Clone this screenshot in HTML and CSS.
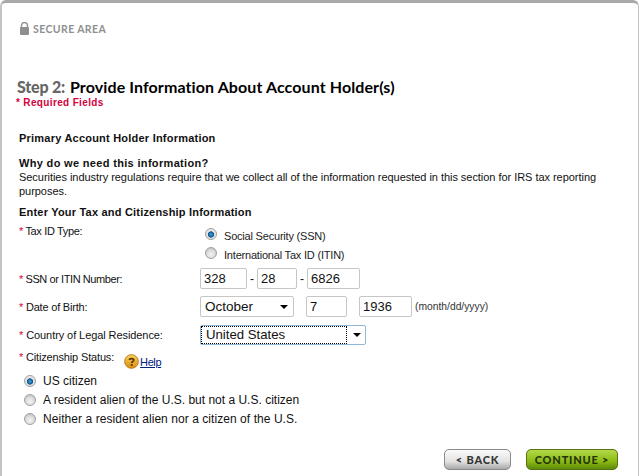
FILE: index.html
```html
<!DOCTYPE html>
<html lang="en">
<head>
<meta charset="utf-8">
<title>Step 2</title>
<link rel="stylesheet" href="styles.css">
</head>
<body>
<div class="frame">
  <div class="secure">
    <svg class="lock" width="9" height="13" viewBox="0 0 9 13"><path d="M1.5 5V3.5a3 3 0 0 1 6 0V5" fill="none" stroke="#8f8f8f" stroke-width="1.4"/><rect x="0" y="5" width="9" height="8" rx="1" fill="#8f8f8f"/></svg>
    <span>SECURE AREA</span>
  </div>
  <h1 class="title"><span class="step">Step 2:</span> Provide Information About Account Holder(s)</h1>
  <div class="required">* Required Fields</div>
  <div class="content">
    <div class="bold primary">Primary Account Holder Information</div>
    <div class="bold why">Why do we need this information?</div>
    <p class="note">Securities industry regulations require that we collect all of the information requested in this section for IRS tax reporting purposes.</p>
    <div class="bold enter">Enter Your Tax and Citizenship Information</div>

    <div class="row taxid">
      <div class="label l-tax"><span class="star">*</span> Tax ID Type:</div>
      <div class="radio-stack">
        <label class="opt"><input type="radio" name="tax" class="radio" checked> Social Security (SSN)</label>
        <label class="opt"><input type="radio" name="tax" class="radio"> International Tax ID (ITIN)</label>
      </div>
    </div>

    <div class="row ssn">
      <div class="label l-ssn"><span class="star">*</span> SSN or ITIN Number:</div>
      <input class="field w47" value="328"><span class="dash">-</span><input class="field w40" value="28"><span class="dash">-</span><input class="field w53" value="6826">
    </div>

    <div class="row dob">
      <div class="label l-dob"><span class="star">*</span> Date of Birth:</div>
      <div class="select month"><span>October</span><i class="arrow"></i></div>
      <input class="field w41 gap12" value="7">
      <input class="field w53 gap12" value="1936">
      <span class="hint">(month/dd/yyyy)</span>
    </div>

    <div class="row country">
      <div class="label l-country"><span class="star">*</span> Country of Legal Residence:</div>
      <div class="select focus"><span class="dotted">United States</span><i class="arrow"></i></div>
    </div>

    <div class="row citizen">
      <div class="label short"><span class="star">*</span> Citizenship Status:</div>
      <svg class="help-icon" width="16" height="16" viewBox="0 0 16 16"><defs><linearGradient id="h" x1="0" y1="0" x2="0" y2="1"><stop offset="0" stop-color="#fbd25e"/><stop offset="1" stop-color="#d98a10"/></linearGradient></defs><circle cx="8" cy="8" r="7.3" fill="url(#h)" stroke="#b8760e"/><path d="M5.6 6.2C5.8 4.6 10.4 4.4 10.4 6.6 10.4 8 8.2 8 8.2 9.6" fill="none" stroke="#5a3a05" stroke-width="1.8"/><rect x="7.2" y="10.6" width="2" height="2" fill="#5a3a05"/></svg>
      <a class="help" href="#">Help</a>
    </div>

    <div class="status">
      <label class="big"><input type="radio" name="cit" class="radio" checked> US citizen</label>
      <label class="big"><input type="radio" name="cit" class="radio"> A resident alien of the U.S. but not a U.S. citizen</label>
      <label class="big wide"><input type="radio" name="cit" class="radio"> Neither a resident alien nor a citizen of the U.S.</label>
    </div>
  </div>
  <div class="actions">
    <a class="btn back" href="#">&lt; BACK</a>
    <a class="btn continue" href="#">CONTINUE &gt;</a>
  </div>
</div>
</body>
</html>
```
FILE: styles.css
```css
html, body { margin: 0; padding: 0; background: #fff; }
body { width: 639px; height: 476px; overflow: hidden; font-family: "Liberation Sans", Arial, sans-serif; color: #111; }
.frame {
  box-sizing: border-box; width: 639px; height: 476px;
  border-top: 3px solid #a9a9a9; border-left: 2px solid #c4c4c4; border-right: 1px solid #c4c4c4;
  border-radius: 6px 6px 0 0; padding-top: 19px;
}
.secure { display: flex; align-items: center; gap: 4px; margin-left: 18px; height: 13px; color: #8f8f8f; font: bold 10.5px "Lato", sans-serif; letter-spacing: .4px; }
.lock { display: block; }
.title { margin: 42px 0 0 15px; font: bold 16px/20px "Lato", sans-serif; color: #000; letter-spacing: .1px; }
.step { color: #666; letter-spacing: -.2px; margin-right: 1px; font-weight: 900; }
.required { margin: 0 0 0 14px; font: bold 10px/12px "Liberation Sans", sans-serif; color: #d4003c; letter-spacing: .35px; }
.content { margin: 22px 0 0 17px; font-size: 11px; line-height: 14px; }
.bold { font-weight: bold; }
.primary { letter-spacing: .22px; }
.why { margin-top: 11px; letter-spacing: .33px; }
.note { margin: 0; width: 590px; letter-spacing: -.04px; }
.enter { margin-top: 7px; letter-spacing: .2px; }
.row { display: flex; align-items: center; }
.label { width: 181px; flex: none; font-size: 11px; }
.l-tax { letter-spacing: -.35px; margin-top: -2px; }
.l-ssn { letter-spacing: -.42px; }
.l-dob { letter-spacing: -.2px; }
.l-country { letter-spacing: -.08px; }
.star { color: #d4003c; }
.taxid { align-items: flex-start; margin-top: 7px; }
.radio-stack { display: flex; flex-direction: column; margin-left: 5px; }
.opt { display: flex; align-items: center; gap: 7px; height: 19px; font-size: 11px; color: #222; letter-spacing: -.2px; }
.opt .radio { margin-top: -4px; }
.radio {
  appearance: none; -webkit-appearance: none; margin: 0; width: 12px; height: 12px; border-radius: 50%; flex: none;
  border: 1px solid #a0a0a0; box-sizing: border-box;
  background: radial-gradient(circle at 50% 65%, #f4f4f4 0, #dcdcdc 50%, #b4b4b4 100%);
}
.radio:checked { background: radial-gradient(circle at 50% 55%, #3ea9de 0, #12508c 38%, #e0e0e0 46%, #f2f2f2 100%); }
.ssn { margin-top: 4px; }
.field {
  box-sizing: border-box; height: 21px; border: 1px solid #c6c6c6; border-radius: 2px; padding: 0 3px;
  font: 13px "Liberation Sans", sans-serif; color: #111; background: #fff; flex: none;
}
.w47 { width: 47px; } .w40 { width: 40px; } .w41 { width: 41px; } .w53 { width: 53px; }
.dash { width: 10px; text-align: center; font-size: 12px; flex: none; }
.dob { margin-top: 7px; }
.gap12 { margin-left: 12px; }
.select {
  box-sizing: border-box; display: flex; align-items: center; justify-content: space-between; height: 21px;
  border: 1px solid #c6c6c6; border-radius: 2px; padding: 0 5px 0 4px; font-size: 13.5px; flex: none;
}
.month { width: 94px; }
.focus { width: 166px; height: 20px; border-color: #8fb8d8; padding: 0 4px 0 0; font-size: 13.2px; }
.dotted { border: 1px dotted #000; box-sizing: border-box; flex: 1; height: 18px; line-height: 16px; padding-left: 4px; margin-right: 6px; }
.arrow { width: 0; height: 0; border: 4px solid transparent; border-top-color: #000; border-bottom: 0; }
.hint { margin-left: 3px; font-size: 10.3px; color: #333; }
.country { margin-top: 8px; }
.citizen { margin-top: 5px; align-items: flex-start; height: 16px; }
.short { width: auto; letter-spacing: -.16px; }
.help-icon { margin: 4px 1px 0 10px; flex: none; width: 15px; height: 15px; }
.help { margin-top: 5px; font-size: 11px; letter-spacing: -.4px; color: #00207f; }
.status { display: flex; flex-direction: column; margin: 5px 0 0 5px; }
.big { display: flex; align-items: center; gap: 7px; height: 19px; font-size: 12px; color: #111; }
.wide { letter-spacing: .06px; }
.actions { display: flex; justify-content: flex-end; gap: 15px; margin: 21px 20px 0 0; }
.btn {
  display: flex; align-items: center; justify-content: center; box-sizing: border-box; height: 21px; border-radius: 5px;
  font: 900 11px "Lato", sans-serif; letter-spacing: .8px; text-decoration: none;
}
.back { width: 67px; color: #333; border: 1px solid #8a8a8a; background: linear-gradient(#fbfbfb, #e2e2e2 60%, #a9a9a9); }
.continue { width: 92px; color: #23350a; border: 1px solid #56730f; background: linear-gradient(#b3d94a, #8cbb14 60%, #5e8a0a); }
```
